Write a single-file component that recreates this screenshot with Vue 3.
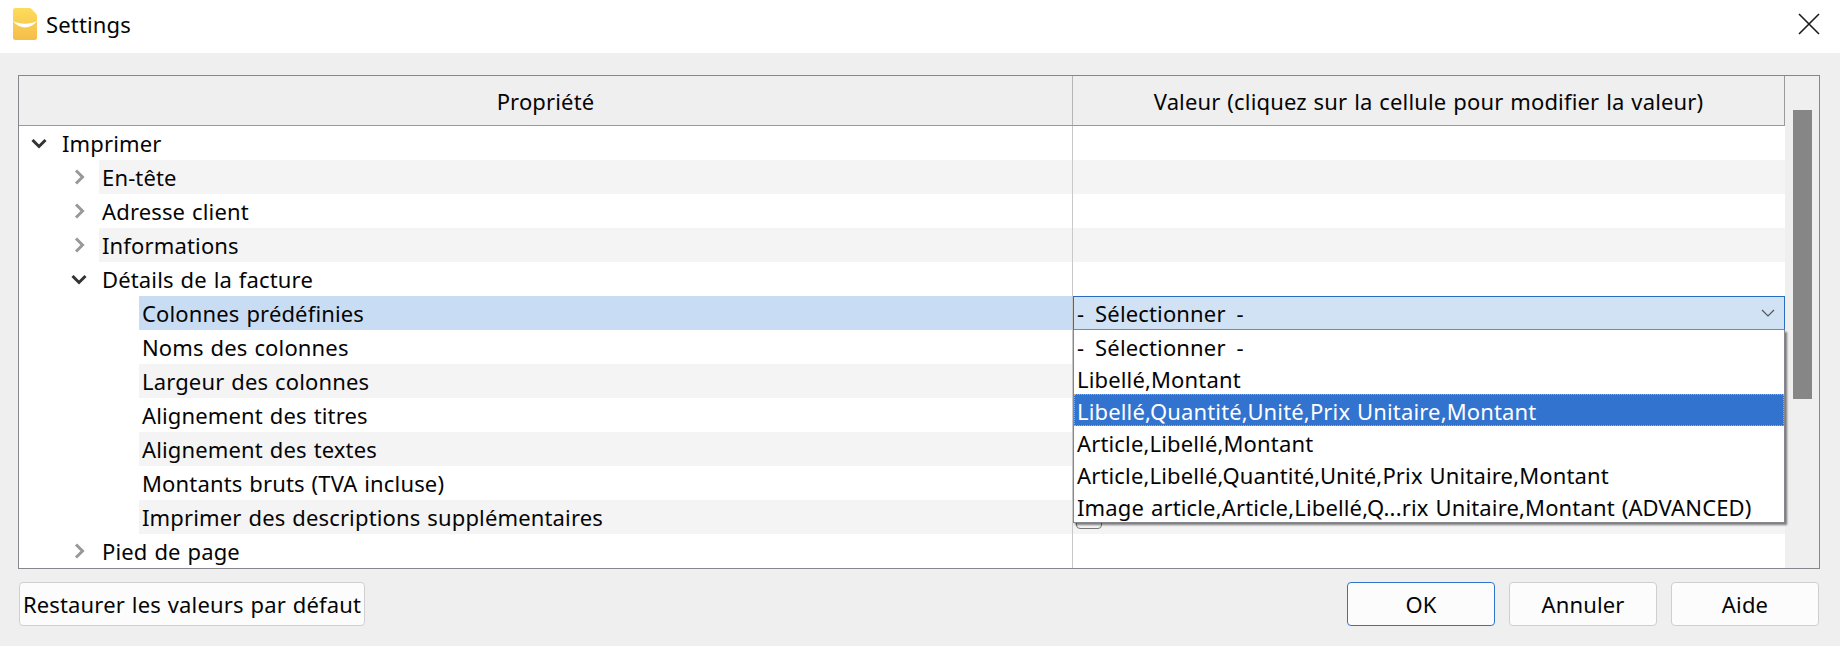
<template>
  <div class="dialog">
    <div class="titlebar">
      <svg class="logo" width="24" height="32" viewBox="0 0 24 32">
        <defs>
          <linearGradient id="logoFill" x1="0" y1="0" x2="0" y2="1">
            <stop offset="0" stop-color="#fcdc5c" />
            <stop offset="1" stop-color="#f5bd4a" />
          </linearGradient>
        </defs>
        <path d="M2.5 0H15.5C17 0 17.8.4 19 1.6L22.6 5.2C23.6 6.2 24 7 24 8.5V29.5C24 31.2 23 32 21.5 32H2.5C1 32 0 31.2 0 29.5V2.5C0 .8 1 0 2.5 0Z" fill="url(#logoFill)" />
        <path d="M0 13C7 16.5 17 16.5 24 13C18 21.5 6 21.5 0 13Z" fill="#fff" />
      </svg>
      <span class="title">Settings</span>
      <svg class="close" width="22" height="22" viewBox="0 0 22 22">
        <path d="M1 1L21 21M21 1L1 21" stroke="#1a1a1a" stroke-width="1.6" fill="none" />
      </svg>
    </div>

    <div class="body">
      <div class="tree">
        <div class="table">
          <div class="head">
            <div class="head-cell col-name">Propriété</div>
            <div class="head-cell col-value">Valeur (cliquez sur la cellule pour modifier la valeur)</div>
          </div>
          <div v-for="row in rows" :key="row.label" class="row">
            <div class="col-name name-cell" :class="'depth' + row.depth">
              <svg v-if="row.arrow" class="arrow" width="16" height="16" viewBox="0 0 16 16">
                <path v-if="row.arrow === 'open'" d="M1.5 5L8 11.5L14.5 5" fill="none" stroke="#333" stroke-width="3" />
                <path v-else d="M5 1.5L11.5 8L5 14.5" fill="none" stroke="#999" stroke-width="3" />
              </svg>
              <div class="name-text" :class="{ alt: row.alt, selected: row.selected }">{{ row.label }}</div>
            </div>
            <div class="col-value value-cell" :class="{ alt: row.alt }"></div>
          </div>
          <div class="checkbox"></div>

          <div class="combo">
            <div class="combo-box">
              <span class="wide">- Sélectionner -</span>
              <svg width="14" height="8" viewBox="0 0 14 8">
                <path d="M1 1L7 7L13 1" fill="none" stroke="#555" stroke-width="1.2" />
              </svg>
            </div>
            <div class="popup">
              <div
                v-for="item in options"
                :key="item"
                class="option"
                :class="{ active: item === activeOption, wide: item === options[0] }"
              >{{ item }}</div>
            </div>
          </div>
        </div>
        <div class="scrollbar">
          <div class="thumb"></div>
        </div>
      </div>

      <div class="actions">
        <button class="btn restore">Restaurer les valeurs par défaut</button>
        <div class="spacer"></div>
        <button class="btn primary">OK</button>
        <button class="btn">Annuler</button>
        <button class="btn">Aide</button>
      </div>
    </div>
  </div>
</template>

<script setup>
const rows = [
  { label: "Imprimer", depth: 0, arrow: "open" },
  { label: "En-tête", depth: 1, arrow: "closed", alt: true },
  { label: "Adresse client", depth: 1, arrow: "closed" },
  { label: "Informations", depth: 1, arrow: "closed", alt: true },
  { label: "Détails de la facture", depth: 1, arrow: "open" },
  { label: "Colonnes prédéfinies", depth: 2, selected: true },
  { label: "Noms des colonnes", depth: 2 },
  { label: "Largeur des colonnes", depth: 2, alt: true },
  { label: "Alignement des titres", depth: 2 },
  { label: "Alignement des textes", depth: 2, alt: true },
  { label: "Montants bruts (TVA incluse)", depth: 2 },
  { label: "Imprimer des descriptions supplémentaires", depth: 2, alt: true },
  { label: "Pied de page", depth: 1, arrow: "closed" },
];

const activeOption = "Libellé,Quantité,Unité,Prix Unitaire,Montant";

const options = [
  "- Sélectionner -",
  "Libellé,Montant",
  activeOption,
  "Article,Libellé,Montant",
  "Article,Libellé,Quantité,Unité,Prix Unitaire,Montant",
  "Image article,Article,Libellé,Q...rix Unitaire,Montant (ADVANCED)",
];
</script>

<style>
html,
body {
  margin: 0;
  background: #efefef;
}
</style>

<style scoped>
.dialog {
  width: 1840px;
  height: 646px;
  overflow: hidden;
  display: flex;
  flex-direction: column;
  background: #efefef;
  font-family: "Noto Sans", "Liberation Sans", sans-serif;
  font-size: 22px;
  letter-spacing: 0.15px;
  word-spacing: 1px;
  color: #050505;
}
.titlebar {
  height: 53px;
  flex: none;
  display: flex;
  align-items: center;
  background: #fff;
  padding: 0 20px 0 13px;
  box-sizing: border-box;
}
.logo {
  margin-right: 9px;
  margin-bottom: 5px;
}
.close {
  margin-bottom: 5px;
}
.title {
  flex: 1;
  margin-bottom: 5px;
}
.body {
  flex: 1;
  padding: 22px 20px 0 18px;
  display: flex;
  flex-direction: column;
}
.tree {
  height: 494px;
  box-sizing: border-box;
  display: flex;
  border: 1px solid #85878c;
  flex: none;
}
.table {
  width: 1766px;
  position: relative;
  background: #fff;
  flex: none;
}
.head {
  height: 50px;
  display: flex;
  box-sizing: border-box;
  border-bottom: 1px solid #9a9a9a;
  border-right: 1px solid #9a9a9a;
  background: #efefef;
}
.head-cell {
  display: flex;
  align-items: center;
  justify-content: center;
}
.head-cell.col-name {
  border-right: 1px solid #b5b5b5;
}
.row {
  height: 34px;
  display: flex;
}
.col-name {
  width: 1054px;
  box-sizing: border-box;
  flex: none;
}
.col-value {
  flex: 1;
}
.name-cell {
  display: flex;
  align-items: center;
  height: 100%;
  position: relative;
  border-right: 1px solid #c9c9c9;
}
.depth1 {
  padding-left: 80px;
}
.depth2 {
  padding-left: 120px;
}
.arrow {
  position: absolute;
  top: 9px;
}
.depth0 .arrow {
  left: 12px;
}
.depth1 .arrow {
  left: 52px;
}
.name-text {
  flex: 1;
  height: 100%;
  display: flex;
  align-items: center;
  padding-left: 3px;
}
.depth0 .name-text {
  padding-left: 43px;
}
.alt {
  background: #f4f4f4;
}
.selected {
  background: #c8ddf3;
}
.checkbox {
  position: absolute;
  left: 1057px;
  top: 436px;
  width: 26px;
  height: 17px;
  box-sizing: border-box;
  border: 1px solid #777;
  border-radius: 4px;
  background: #f4f4f4;
}
.combo {
  position: absolute;
  left: 1054px;
  top: 220px;
  width: 712px;
}
.combo-box {
  height: 34px;
  box-sizing: border-box;
  display: flex;
  align-items: center;
  justify-content: space-between;
  padding: 0 9px 0 3px;
  background: #d0e2f4;
  border: 1px solid #2a6cc0;
  border-bottom: 1px solid #85878c;
}
.wide {
  word-spacing: 5px;
}
.popup {
  background: #fff;
  border: 1px solid #85878c;
  border-top: none;
  box-sizing: border-box;
  height: 193px;
  box-shadow: 2px 2px 2px rgba(0, 0, 0, 0.5);
}
.option {
  height: 32px;
  line-height: 34px;
  padding-left: 3px;
  white-space: nowrap;
}
.option.active {
  background: #3273cf;
  color: #fff;
  outline: 1px dotted #d9a35f;
  outline-offset: -1px;
}
.scrollbar {
  flex: 1;
  padding: 34px 7px 0 8px;
  background: #efefef;
}
.thumb {
  height: 289px;
  background: #868686;
}
.actions {
  margin-top: 13px;
  height: 44px;
  display: flex;
  gap: 14px;
  padding: 0 1px;
}
.spacer {
  flex: 1;
}
.btn {
  width: 148px;
  height: 44px;
  box-sizing: border-box;
  border: 1px solid #cfcfcf;
  border-radius: 4px;
  background: #fcfcfc;
  font: inherit;
  letter-spacing: inherit;
  word-spacing: inherit;
  color: #050505;
  padding: 0;
}
.btn.restore {
  width: 346px;
}
.btn.primary {
  border-color: #2f74c8;
}
</style>
